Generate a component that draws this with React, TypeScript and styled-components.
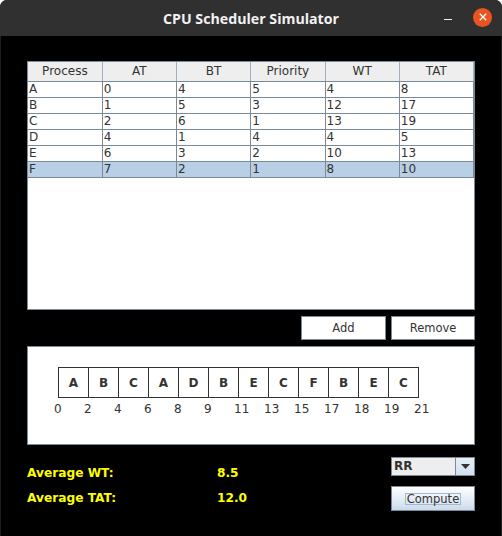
import React from "react";
import styled, { createGlobalStyle } from "styled-components";

const GlobalStyle = createGlobalStyle`
  html, body { margin: 0; padding: 0; background: #ffffff; }
  * { box-sizing: border-box; }
`;

const Window = styled.div`
  width: 502px;
  height: 536px;
  display: flex;
  flex-direction: column;
  background: #000;
  border-radius: 7px 7px 0 0;
  overflow: hidden;
`;

const TitleBar = styled.div`
  height: 36px;
  flex: none;
  background: #303030;
  display: grid;
  grid-template-columns: 1fr auto 1fr;
  align-items: center;
`;

const Title = styled.div`
  grid-column: 2;
  color: #f2f2f2;
  font-family: "Open Sans", "Noto Sans", sans-serif;
  font-weight: 700;
  font-size: 14.2px;
`;

const Controls = styled.div`
  grid-column: 3;
  justify-self: end;
  display: flex;
  align-items: center;
  gap: 21px;
  padding-right: 10px;
  height: 36px;
`;

const Minimize = styled.div`
  width: 8px;
  height: 1px;
  background: #f0f0f0;
  margin-top: 2px;
`;

const CloseBtn = styled.div`
  width: 19px;
  height: 19px;
  border-radius: 50%;
  background: #e95420;
  display: flex;
  align-items: center;
  justify-content: center;
  margin-top: -2px;
`;

const Body = styled.div`
  flex: 1;
  display: flex;
  flex-direction: column;
  padding: 25px 26px 0 26px;
  border-left: 1px solid #1e1e1e;
  border-right: 1px solid #1e1e1e;
  font-family: "DejaVu Sans", sans-serif;
`;

const TableFrame = styled.div`
  height: 249px;
  border: 1px solid #7a8a99;
  background: #fff;
  flex: none;
`;

const Table = styled.table`
  width: 100%;
  table-layout: fixed;
  border-collapse: collapse;
  font-size: 12px;
`;

const Th = styled.th`
  height: 19px;
  padding: 0;
  background: #eeeeee;
  color: #333;
  font-weight: 400;
  text-align: center;
  border-right: 1px solid #a3b0bd;
  border-bottom: 1px solid #7a8a99;
`;

const Td = styled.td<{ $sel?: boolean }>`
  height: 16px;
  padding: 0 0 0 1px;
  line-height: 15px;
  color: #333;
  background: ${(p) => (p.$sel ? "#b8cfe5" : "#fff")};
  border-right: 1px solid #7a8a99;
  border-bottom: 1px solid #7a8a99;
  white-space: nowrap;
  overflow: hidden;
`;

const ButtonRow = styled.div`
  margin-top: 6px;
  display: flex;
  justify-content: flex-end;
  gap: 5px;
`;

const PlainButton = styled.div<{ $w: number }>`
  width: ${(p) => p.$w}px;
  height: 24px;
  background: #fff;
  border: 1px solid #7a8a99;
  color: #333;
  font-size: 11.5px;
  display: flex;
  align-items: center;
  justify-content: center;
`;

const GanttPanel = styled.div`
  margin-top: 6px;
  height: 99px;
  border: 1px solid #7a8a99;
  background: #fff;
  padding: 20px 0 0 30px;
  flex: none;
`;

const BoxRow = styled.div`
  display: flex;
`;

const Box = styled.div`
  width: 31px;
  height: 31px;
  border: 1px solid #333;
  margin-left: -1px;
  &:first-child { margin-left: 0; }
  display: flex;
  align-items: center;
  justify-content: center;
  font-size: 12px;
  font-weight: 700;
  color: #333;
`;

const TimeRow = styled.div`
  display: flex;
  margin-left: -4px;
  margin-top: 4px;
`;

const Tick = styled.div`
  width: 30px;
  flex: none;
  font-size: 12px;
  color: #333;
  line-height: 14px;
`;

const Bottom = styled.div`
  margin-top: 12px;
  display: flex;
  justify-content: space-between;
`;

const Stats = styled.div`
  padding-top: 3px;
  display: grid;
  grid-template-columns: 190px auto;
  grid-auto-rows: 25px;
  align-items: center;
`;

const StatText = styled.div`
  color: #ffff00;
  font-weight: 700;
  font-size: 12.2px;
`;

const Side = styled.div`
  width: 84px;
  display: flex;
  flex-direction: column;
  gap: 10px;
`;

const Combo = styled.div`
  height: 19px;
  display: flex;
  border: 1px solid #7a8a99;
  background: #eeeeee;
`;

const ComboText = styled.div`
  flex: 1;
  padding-left: 2px;
  font-size: 12px;
  font-weight: 700;
  color: #333;
  line-height: 17px;
`;

const ComboArrow = styled.div`
  width: 19px;
  border-left: 1px solid #7a8a99;
  background: linear-gradient(#e6eef7, #d3e0ee);
  display: flex;
  align-items: center;
  justify-content: center;
`;

const ComputeButton = styled.div`
  height: 25px;
  border: 1px solid #7a8a99;
  background: linear-gradient(#ffffff 0%, #eef3f9 35%, #dce7f2 70%, #c9daeb 100%);
  display: flex;
  align-items: center;
  justify-content: center;
`;

const FocusRect = styled.div`
  border: 1px solid #a3b8cc;
  padding: 0 1px;
  line-height: 10px;
  height: 12px;
  color: #333;
  font-size: 11.5px;
`;

const columns = ["Process", "AT", "BT", "Priority", "WT", "TAT"];
const rows = [
  ["A", "0", "4", "5", "4", "8"],
  ["B", "1", "5", "3", "12", "17"],
  ["C", "2", "6", "1", "13", "19"],
  ["D", "4", "1", "4", "4", "5"],
  ["E", "6", "3", "2", "10", "13"],
  ["F", "7", "2", "1", "8", "10"],
];
const gantt = ["A", "B", "C", "A", "D", "B", "E", "C", "F", "B", "E", "C"];
const times = ["0", "2", "4", "6", "8", "9", "11", "13", "15", "17", "18", "19", "21"];

export default function App() {
  return (
    <>
      <GlobalStyle />
      <Window>
        <TitleBar>
          <Title>CPU Scheduler Simulator</Title>
          <Controls>
            <Minimize />
            <CloseBtn>
              <svg width="8" height="8" viewBox="0 0 8 8">
                <path d="M0.8 0.8 L7.2 7.2 M7.2 0.8 L0.8 7.2" stroke="#fff" strokeWidth="1.3" />
              </svg>
            </CloseBtn>
          </Controls>
        </TitleBar>
        <Body>
          <TableFrame>
            <Table>
              <thead>
                <tr>
                  {columns.map((c) => (
                    <Th key={c}>{c}</Th>
                  ))}
                </tr>
              </thead>
              <tbody>
                {rows.map((r, i) => (
                  <tr key={i}>
                    {r.map((v, j) => (
                      <Td key={j} $sel={i === rows.length - 1}>
                        {v}
                      </Td>
                    ))}
                  </tr>
                ))}
              </tbody>
            </Table>
          </TableFrame>
          <ButtonRow>
            <PlainButton $w={85}>Add</PlainButton>
            <PlainButton $w={84}>Remove</PlainButton>
          </ButtonRow>
          <GanttPanel>
            <BoxRow>
              {gantt.map((g, i) => (
                <Box key={i}>{g}</Box>
              ))}
            </BoxRow>
            <TimeRow>
              {times.map((t, i) => (
                <Tick key={i}>{t}</Tick>
              ))}
            </TimeRow>
          </GanttPanel>
          <Bottom>
            <Stats>
              <StatText>Average WT:</StatText>
              <StatText>8.5</StatText>
              <StatText>Average TAT:</StatText>
              <StatText>12.0</StatText>
            </Stats>
            <Side>
              <Combo>
                <ComboText>RR</ComboText>
                <ComboArrow>
                  <svg width="9" height="5" viewBox="0 0 9 5">
                    <path d="M0 0 H9 L4.5 5 Z" fill="#333" />
                  </svg>
                </ComboArrow>
              </Combo>
              <ComputeButton>
                <FocusRect>Compute</FocusRect>
              </ComputeButton>
            </Side>
          </Bottom>
        </Body>
      </Window>
    </>
  );
}
